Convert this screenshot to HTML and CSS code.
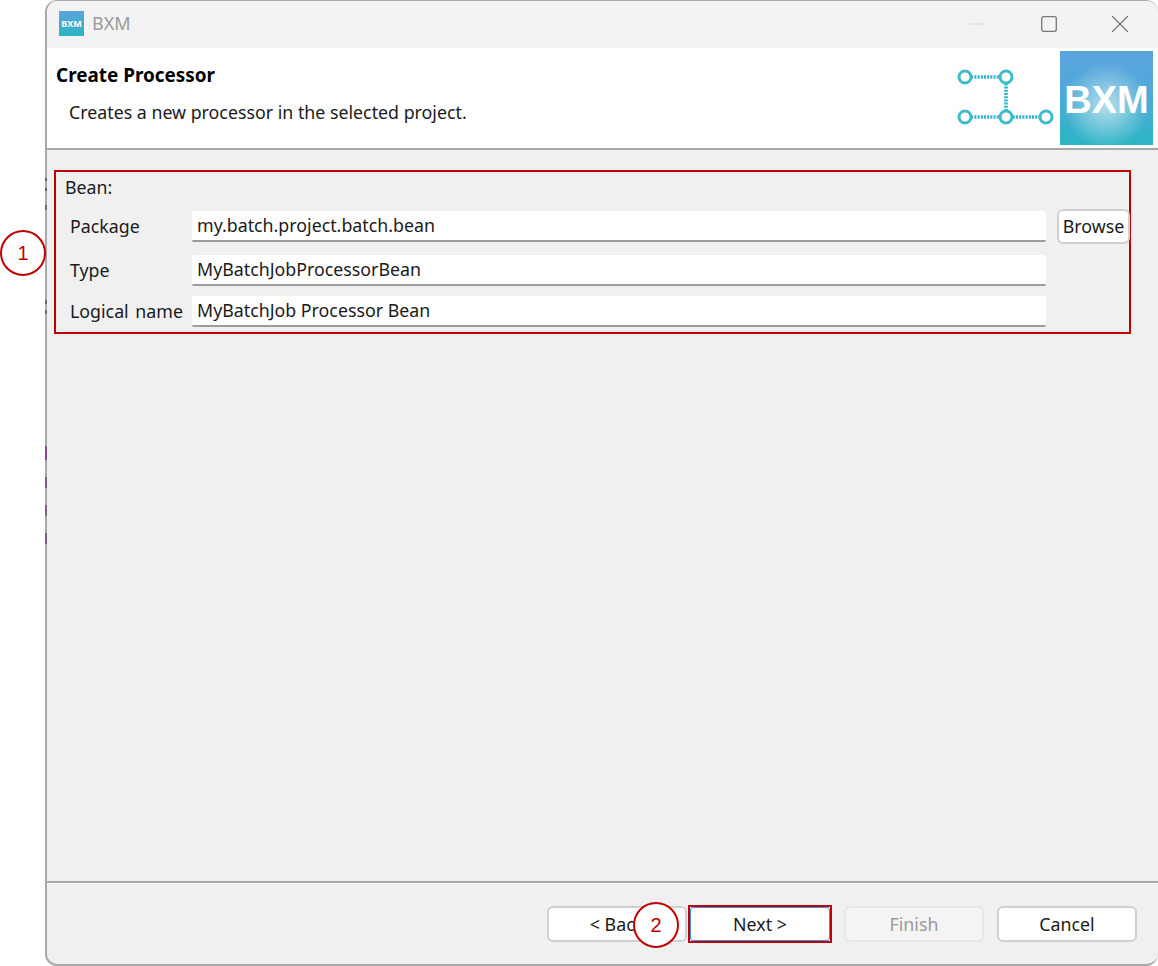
FILE: index.html
```html
<!DOCTYPE html>
<html lang="en">
<head>
<meta charset="utf-8">
<title>BXM</title>
<link rel="stylesheet" href="styles.css">
</head>
<body>
<div class="window">
  <div class="titlebar">
    <div class="app-icon">BXM</div>
    <div class="app-title">BXM</div>
    <div class="win-controls">
      <svg class="win-btn" viewBox="0 0 16 16"><path d="M0 8H16" stroke="#d6d6d6" stroke-width="1.2" fill="none"/></svg>
      <svg class="win-btn" viewBox="0 0 16 16"><rect x="0.7" y="0.7" width="14.6" height="14.6" rx="2" stroke="#777" stroke-width="1.3" fill="none"/></svg>
      <svg class="win-btn" viewBox="0 0 16 16"><path d="M0 0L16 16M16 0L0 16" stroke="#777" stroke-width="1.3" fill="none"/></svg>
    </div>
  </div>
  <header class="banner">
    <div class="banner-text">
      <h1 class="banner-title">Create Processor</h1>
      <p class="banner-desc">Creates a new processor in the selected project.</p>
    </div>
    <svg class="flow-icon" width="100" height="60" viewBox="0 0 100 60">
      <g stroke="#2fb5c9" stroke-width="3.6" stroke-dasharray="2 1.2" fill="none">
        <path d="M14 12H52M52 12V52M14 52H90"/>
      </g>
      <g stroke="#3dbccd" stroke-width="3" fill="#fff">
        <circle cx="11" cy="12" r="6"/><circle cx="52" cy="12" r="6"/>
        <circle cx="11" cy="52" r="6"/><circle cx="52" cy="52" r="6"/><circle cx="92" cy="52" r="6"/>
      </g>
    </svg>
    <div class="logo">BXM</div>
  </header>
  <main class="content">
    <section class="form-box">
      <div class="group-label">Bean:</div>
      <div class="row row-package">
        <label class="field-label">Package</label>
        <div class="field">my.batch.project.batch.bean</div>
        <button class="btn btn-browse">Browse</button>
      </div>
      <div class="row row-type">
        <label class="field-label">Type</label>
        <div class="field">MyBatchJobProcessorBean</div>
      </div>
      <div class="row row-name">
        <label class="field-label">Logical name</label>
        <div class="field">MyBatchJob Processor Bean</div>
      </div>
    </section>
  </main>
  <footer class="footer">
    <button class="btn btn-wide">&lt; Back</button>
    <div class="next-mark"><button class="btn btn-wide btn-next">Next &gt;</button></div>
    <button class="btn btn-wide btn-disabled">Finish</button>
    <button class="btn btn-wide">Cancel</button>
  </footer>
</div>
<div class="edge-specks"></div>
<div class="callout callout-one">1</div>
<div class="callout callout-two">2</div>
</body>
</html>
```
FILE: styles.css
```css
* { box-sizing: border-box; }
html, body { margin: 0; padding: 0; }
body {
  position: relative;
  width: 1158px;
  height: 966px;
  overflow: hidden;
  background: #fff;
  font-family: "Noto Sans", "Open Sans", sans-serif;
  font-size: 17.8px;
  color: #1a1a1a;
}
.window {
  margin-left: 45px;
  width: 1113px;
  height: 966px;
  display: flex;
  flex-direction: column;
  background: #f0f0f0;
  border: 2px solid #a9a9a9;
  border-right: 0;
  border-top-width: 1px;
  border-radius: 12px;
  overflow: hidden;
}
.titlebar {
  height: 47px;
  flex: none;
  display: flex;
  align-items: center;
  padding: 0 0 3px 12px;
  background: #f3f3f3;
}
.app-icon {
  width: 25px;
  height: 25px;
  display: flex;
  align-items: center;
  justify-content: center;
  background: linear-gradient(180deg, #5ba4de, #2bb5c4);
  color: #fff;
  font-size: 9px;
  font-weight: 700;
}
.app-title {
  margin-left: 8px;
  font-size: 18px;
  color: #9a9a9a;
}
.win-controls {
  margin: 2px 0 0 auto;
  display: flex;
  align-items: center;
  gap: 55px;
  padding-right: 30px;
}
.win-btn { width: 16px; height: 16px; display: block; }
.banner {
  height: 102px;
  flex: none;
  display: flex;
  align-items: flex-start;
  background: #fff;
  border-bottom: 2px solid #a9a9a9;
}
.banner-text { flex: 1; padding: 15px 0 0 9px; }
.banner-title {
  margin: 0;
  font-size: 18.9px;
  line-height: 24px;
  font-weight: 700;
  color: #000;
}
.banner-desc {
  margin: 13px 0 0 13px;
  font-size: 17.8px;
  line-height: 24px;
}
.flow-icon { flex: none; margin: 17px 6px 0 0; }
.logo {
  flex: none;
  width: 93px;
  height: 94px;
  margin: 3px 5px 0 0;
  padding-top: 5px;
  display: flex;
  align-items: center;
  justify-content: center;
  background:
    radial-gradient(circle at 50% 58%, rgba(200, 232, 240, 0.85) 0%, rgba(200, 232, 240, 0) 60%),
    linear-gradient(180deg, #5ba4de 0%, #4fa9d8 45%, #2bb5c4 100%);
  color: #fff;
  font-family: "Liberation Sans", sans-serif;
  font-weight: 700;
  font-size: 38px;
}
.content { flex: 1; padding: 20px 27px 0 7px; }
.form-box {
  height: 164px;
  border: 2px solid #c00000;
  padding: 3px 0 0 9px;
}
.group-label { line-height: 24px; }
.row { display: flex; align-items: center; padding-left: 1px; }
.row-package { margin-top: 10px; }
.row-type { margin-top: 11px; }
.row-name { margin-top: 10px; }
.field-label {
  width: 126px;
  flex: none;
  padding: 0 0 2px 4px;
  line-height: 24px;
  word-spacing: 2px;
}
.field {
  width: 854px;
  height: 31px;
  flex: none;
  padding-left: 5px;
  line-height: 29px;
  background: #fff;
  border-bottom: 2px solid #9c9c9c;
  border-radius: 2px;
}
.btn {
  font: inherit;
  color: #1a1a1a;
  background: #fff;
  border: 2px solid #d0d0d0;
  border-radius: 6px;
  padding: 0;
}
.btn-browse {
  flex: none;
  width: 73px;
  height: 35px;
  margin-left: 11px;
  padding-bottom: 2px;
}
.footer {
  height: 83px;
  flex: none;
  display: flex;
  align-items: flex-start;
  padding: 23px 0 0 500px;
  border-top: 2px solid #a9a9a9;
  box-shadow: inset 0 1px 0 #fff;
}
.btn-wide { width: 140px; height: 36px; flex: none; }
.next-mark {
  flex: none;
  margin: -1px 0 0 1px;
  border: 2px solid #c00000;
  height: 38px;
  display: flex;
}
.btn-next {
  height: 34px;
  border: 1px solid #3a8fd8;
  border-radius: 3px;
}
.btn-disabled {
  margin-left: 12px;
  margin-right: 13px;
  background: #f4f4f4;
  border-color: #e8e8e8;
  color: #9a9a9a;
}
.edge-specks {
  position: absolute;
  left: 45px;
  top: 150px;
  width: 2px;
  height: 400px;
  opacity: 0.75;
  background: linear-gradient(180deg,
    transparent 0 28px, #4a4a5a 28px 31px, transparent 31px 38px, #4a4a5a 38px 41px,
    transparent 41px 55px, #55506a 55px 60px, transparent 60px 150px,
    #55506a 150px 154px, transparent 154px 160px, #55506a 160px 164px, transparent 164px 296px,
    #7a2d86 296px 310px, transparent 310px 327px, #6a4a70 327px 338px,
    transparent 338px 355px, #6a4a70 355px 366px, transparent 366px 383px,
    #6a4a70 383px 394px, transparent 394px);
}
.callout {
  position: absolute;
  width: 46px;
  height: 46px;
  display: flex;
  align-items: center;
  justify-content: center;
  border: 2px solid #c00000;
  border-radius: 50%;
  background: #fff;
  color: #c00000;
  font-family: "Liberation Sans", sans-serif;
  font-size: 20px;
}
.callout-one { left: 0; top: 230px; }
.callout-two { left: 633px; top: 902px; }
```
